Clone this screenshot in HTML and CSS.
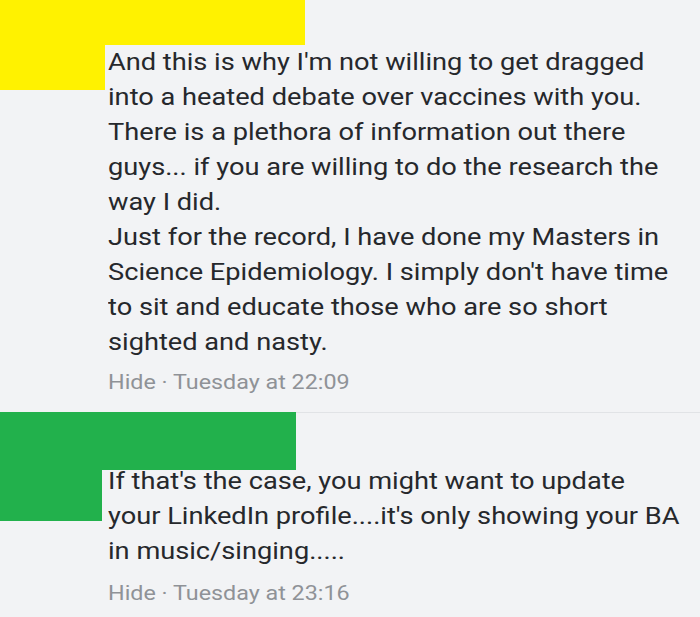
FILE: index.html
```html
<!DOCTYPE html>
<html>

<head>
  <link rel="stylesheet" href="styles.css">
</head>

<body>
  <div class="thread">
    <div class="comment first">
      <div class="redact yellow wide"></div>
      <div class="redact yellow tall"></div>
      <p class="body">
        And this is why I'm not willing to get dragged<br>
        into a heated debate over vaccines with you.<br>
        There is a plethora of information out there<br>
        guys... if you are willing to do the research the<br>
        way I did.<br>
        Just for the record, I have done my Masters in<br>
        Science Epidemiology. I simply don't have time<br>
        to sit and educate those who are so short<br>
        sighted and nasty.
      </p>
      <div class="meta">Hide · Tuesday at 22:09</div>
    </div>

    <div class="comment second">
      <div class="redact green wide"></div>
      <div class="redact green tall"></div>
      <p class="body">
        If that's the case, you might want to update<br>
        your LinkedIn profile....it's only showing your BA<br>
        in music/singing.....
      </p>
      <div class="meta">Hide · Tuesday at 23:16</div>
    </div>
  </div>
</body>

</html>
```

FILE: styles.css
```css
* {
  box-sizing: border-box;
}

body {
  margin: 0;
  background-color: #f2f3f5;
  font-family: Roboto, "Liberation Sans", sans-serif;
  width: 700px;
  height: 617px;
  overflow: hidden;
}

.comment {
  position: relative;
  padding-left: 108px;
}

.first {
  padding-top: 44px;
  height: 413px;
  border-bottom: 1px solid #e1e3e6;
}

.second {
  padding-top: 50px;
}

.body,
.meta {
  width: 520px;
  white-space: nowrap;
  transform: scaleX(1.11);
  transform-origin: left top;
}

.body {
  margin: 0;
  font-size: 24.5px;
  line-height: 35px;
  color: #26282c;
}

.meta {
  margin-top: 10px;
  font-size: 21px;
  line-height: 26px;
  color: #8f9297;
}

.second .meta {
  margin-top: 12px;
}

/* name blocks painted over the avatar and author */
.redact {
  position: absolute;
  left: 0;
  top: 0;
}

.yellow {
  background-color: #fff200;
}

.green {
  background-color: #22b14c;
}

.first .wide {
  width: 305px;
  height: 45px;
}

.first .tall {
  width: 105px;
  height: 90px;
}

.second .wide {
  top: -1px;
  width: 296px;
  height: 58px;
}

.second .tall {
  top: -1px;
  width: 102px;
  height: 109px;
}
```
